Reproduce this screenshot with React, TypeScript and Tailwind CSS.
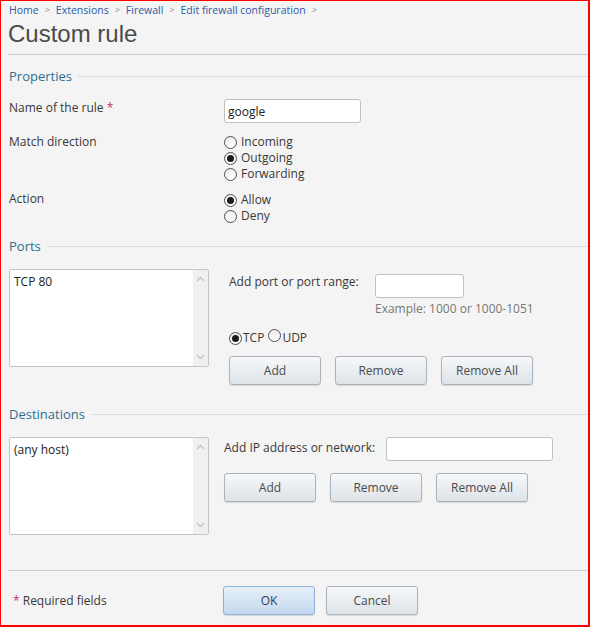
import React from "react";

function Radio({ checked }: { checked?: boolean }) {
  return (
    <span className="inline-flex h-[13px] w-[13px] shrink-0 items-center justify-center rounded-full border border-[#4f4f4f] bg-gradient-to-b from-[#ececec] to-white">
      {checked && <span className="h-[7px] w-[7px] rounded-full bg-[#1c1c1c]" />}
    </span>
  );
}

function RadioLine({ label, checked }: { label: string; checked?: boolean }) {
  return (
    <div className="flex h-[16px] items-center gap-[4px]">
      <Radio checked={checked} />
      <span className="leading-[16px]">{label}</span>
    </div>
  );
}

function Btn({ children }: { children: React.ReactNode }) {
  return (
    <button className="h-[29px] w-[92px] rounded-[3px] border border-[#aab2ba] bg-gradient-to-b from-[#f6f8fa] to-[#dde3e8] text-[12px] text-[#4a4a4a] shadow-[0_1px_1px_rgba(0,0,0,0.12)]">
      {children}
    </button>
  );
}

function Section({ title }: { title: string }) {
  return (
    <div className="flex h-[16px] items-center">
      <span className="text-[13px] leading-[16px] text-[#2f6e8e]">{title}</span>
      <span className="ml-[6px] h-px flex-1 bg-[#d6dde3]" />
    </div>
  );
}

function ListBox({ item }: { item: string }) {
  return (
    <div className="flex h-[98px] w-[200px] shrink-0 rounded-[2px] border border-[#c4c4c4] bg-white">
      <div className="flex-1 px-[4px] pt-[4px] leading-[16px] text-[#222]">{item}</div>
      <div className="flex w-[15px] flex-col items-center justify-between bg-[#f0f0f0] py-[6px]">
        <svg width="9" height="6" viewBox="0 0 9 6">
          <path d="M1 5 L4.5 1.5 L8 5" fill="none" stroke="#c2c2c2" strokeWidth="1.3" />
        </svg>
        <svg width="9" height="6" viewBox="0 0 9 6">
          <path d="M1 1 L4.5 4.5 L8 1" fill="none" stroke="#c2c2c2" strokeWidth="1.3" />
        </svg>
      </div>
    </div>
  );
}

const crumbs = ["Home", "Extensions", "Firewall", "Edit firewall configuration"];

export default function App() {
  return (
    <div className="box-border h-[627px] w-[590px] overflow-hidden border-b-2 border-l border-r-2 border-t border-[#ff0000] bg-[#f4f4f4] font-['Open_Sans',sans-serif] text-[12px] text-[#383838]">
      <div className="pl-[7px]">
        {/* breadcrumb */}
        <div className="mt-[2px] flex h-[14px] items-center pl-[1px] text-[10.5px] leading-[14px]">
          {crumbs.map((c) => (
            <React.Fragment key={c}>
              <span className="text-[#2a5aa8]">{c}</span>
              <span className="mx-[6px] text-[9px] text-[#8a8a8a]">&gt;</span>
            </React.Fragment>
          ))}
        </div>
        <h1 className="mt-[3px] h-[28px] font-['Liberation_Sans',Arial,sans-serif] text-[24px] leading-[28px] text-[#4b4b4b]">
          Custom rule
        </h1>
        <div className="mt-[6px] h-px bg-[#cdcdcd]" />

        {/* properties */}
        <div className="mt-[13px] pl-[1px]">
          <Section title="Properties" />
        </div>
        <div className="pl-[1px]">
          <div className="mt-[15px] flex items-start">
            <div className="w-[215px] pt-[2px] leading-[14px]">
              Name of the rule <span className="text-[#c0306a]">*</span>
            </div>
            <input
              readOnly
              value="google"
              className="h-[24px] w-[137px] rounded-[3px] border border-[#c0c0c0] bg-white px-[3px] text-[12px] text-[#222] outline-none"
            />
          </div>
          <div className="mt-[11px] flex items-start">
            <div className="w-[215px] pt-[1px] leading-[14px]">Match direction</div>
            <div>
              <RadioLine label="Incoming" />
              <RadioLine label="Outgoing" checked />
              <RadioLine label="Forwarding" />
            </div>
          </div>
          <div className="mt-[10px] flex items-start">
            <div className="w-[215px] leading-[14px]">Action</div>
            <div>
              <RadioLine label="Allow" checked />
              <RadioLine label="Deny" />
            </div>
          </div>
        </div>

        {/* ports */}
        <div className="mt-[14px] pl-[1px]">
          <Section title="Ports" />
        </div>
        <div className="mt-[15px] flex items-start pl-[1px]">
          <ListBox item="TCP 80" />
          <div className="ml-[20px] mt-[5px]">
            <div className="flex items-start">
              <div className="w-[146px] leading-[16px]">Add port or port range:</div>
              <input
                readOnly
                className="h-[24px] w-[89px] rounded-[3px] border border-[#c0c0c0] bg-white outline-none"
              />
            </div>
            <div className="ml-[146px] mt-[4px] leading-[14px] text-[#777]">Example: 1000 or 1000-1051</div>
            <div className="mt-[14px] flex h-[16px] items-center">
              <Radio checked />
              <span className="ml-[1px]">TCP</span>
              <span className="ml-[4px]">
                <Radio />
              </span>
              <span className="ml-[1px]">UDP</span>
            </div>
            <div className="mt-[10px] flex gap-[14px]">
              <Btn>Add</Btn>
              <Btn>Remove</Btn>
              <Btn>Remove All</Btn>
            </div>
          </div>
        </div>

        {/* destinations */}
        <div className="mt-[21px] pl-[1px]">
          <Section title="Destinations" />
        </div>
        <div className="mt-[15px] flex items-start pl-[1px]">
          <ListBox item="(any host)" />
          <div className="ml-[15px]">
            <div className="flex items-start">
              <div className="w-[162px] pt-[4px] leading-[14px]">Add IP address or network:</div>
              <input
                readOnly
                className="h-[24px] w-[167px] rounded-[3px] border border-[#c0c0c0] bg-white outline-none"
              />
            </div>
            <div className="mt-[12px] flex gap-[14px]">
              <Btn>Add</Btn>
              <Btn>Remove</Btn>
              <Btn>Remove All</Btn>
            </div>
          </div>
        </div>

        {/* footer */}
        <div className="mt-[35px] h-px bg-[#cdcdcd]" />
        <div className="mt-[15px] flex items-center">
          <div className="w-[215px] pl-[5px] leading-[14px]">
            <span className="text-[#c0306a]">*</span> Required fields
          </div>
          <button className="h-[29px] w-[92px] rounded-[3px] border border-[#8fb2d7] bg-gradient-to-b from-[#e6f0f9] to-[#c2d8ed] text-[12px] text-[#2e3f5c] shadow-[0_1px_1px_rgba(0,0,0,0.12)]">
            OK
          </button>
          <div className="ml-[11px]">
            <Btn>Cancel</Btn>
          </div>
        </div>
      </div>
    </div>
  );
}
